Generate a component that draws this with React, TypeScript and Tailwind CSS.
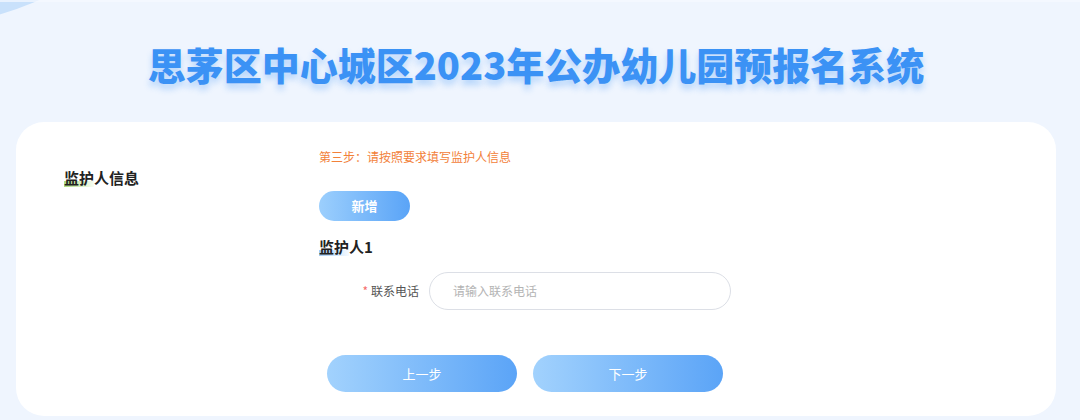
import React from 'react';

const font = "font-['Noto_Sans_CJK_SC','Noto_Sans',sans-serif]";

const App: React.FC = () => {
  return (
    <div className={`relative w-full h-[420px] overflow-hidden bg-[#eff5fe] ${font}`}>
      {/* top-left decoration */}
      <div className="absolute -left-[449px] -top-[669px] w-[698px] h-[698px] rounded-full bg-[#c9e1fb]" />
      <div className="absolute left-0 top-0 w-full h-[2px] bg-[#f7faff]/70" />

      <div className="relative flex flex-col h-full pl-[16px] pr-[24px]">
        <div className="h-[122px] flex items-center justify-center pt-[6px]">
          <h1 className="text-[38px] leading-none font-black text-[#3b92f5] [text-shadow:0_5px_6px_rgba(59,146,245,0.32)]">
            思茅区中心城区2023年公办幼儿园预报名系统
          </h1>
        </div>

        <div className="h-[294px] bg-white rounded-[28px] flex">
          <div className="w-[303px] pl-[48px] pt-[45px]">
            <div className="text-[15px] leading-[22px] font-bold text-[#222]">
              <span className="bg-[linear-gradient(to_right,#aedd80,rgba(220,245,200,0.2))] bg-[length:100%_6px] bg-no-repeat bg-[position:0_92%]">监护</span>
              人信息
            </div>
          </div>

          <div className="flex-1 flex flex-col pt-[27px]">
            <div className="text-[12px] leading-[16px] text-[#f2813a]">第三步：请按照要求填写监护人信息</div>

            <button className="mt-[26px] w-[91px] h-[30px] rounded-full bg-[linear-gradient(to_right,#9ccffd,#5aa4f7)] text-white text-[13px] font-bold">
              新增
            </button>

            <div className="mt-[16px] text-[15px] leading-[20px] font-bold text-[#222]">
              <span className="bg-[linear-gradient(to_right,#a2cdf9,rgba(210,232,253,0.2))] bg-[length:100%_6px] bg-no-repeat bg-[position:0_92%]">监护</span>
              人1
            </div>

            <div className="mt-[15px] flex items-center gap-[10px]">
              <label className="w-[100px] text-right text-[12px] text-[#555]">
                <span className="text-[#f56c6c] mr-[3px]">*</span>联系电话
              </label>
              <div className="w-[302px] h-[38px] rounded-full border border-[#dcdfe6] flex items-center pl-[23px] text-[12px] text-[#b4b4b4]">
                请输入联系电话
              </div>
            </div>

            <div className="mt-[45px] ml-[8px] flex gap-[16px]">
              <button className="w-[190px] h-[37px] rounded-full bg-[linear-gradient(to_right,#a2d2fd,#5ba4f7)] text-white text-[13px]">上一步</button>
              <button className="w-[190px] h-[37px] rounded-full bg-[linear-gradient(to_right,#a2d2fd,#5ba4f7)] text-white text-[13px]">下一步</button>
            </div>
          </div>
        </div>
      </div>
    </div>
  );
};

export default App;
